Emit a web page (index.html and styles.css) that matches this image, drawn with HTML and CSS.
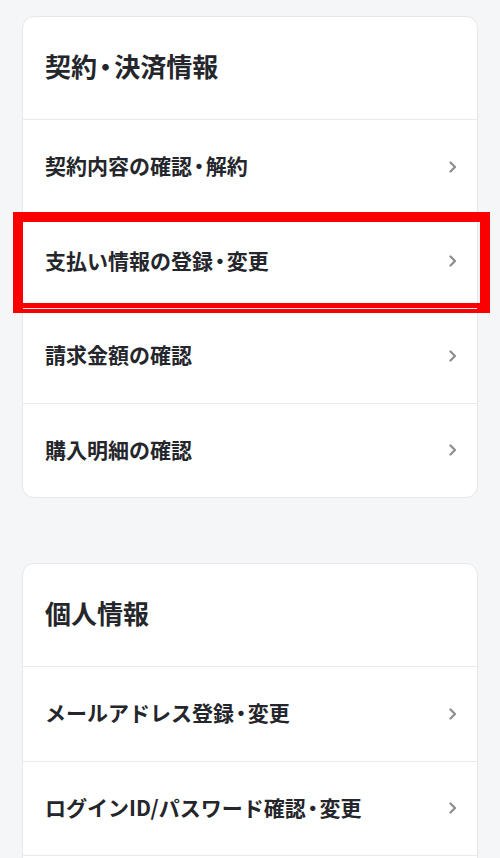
FILE: index.html
```html
<!DOCTYPE html>
<html lang="ja">
<head>
<meta charset="utf-8">
<link rel="stylesheet" href="styles.css">
</head>
<body>
<div class="page">
  <section class="card">
    <h2 class="card-title">契約<span class="sep">・</span>決済情報</h2>
    <a class="row"><span class="label">契約内容の確認<span class="sep">・</span>解約</span><svg class="chev" viewBox="0 0 8 12"><path d="M1.5 1.5 L6 6 L1.5 10.5"/></svg></a>
    <a class="row highlighted"><span class="label">支払い情報の登録<span class="sep">・</span>変更</span><svg class="chev" viewBox="0 0 8 12"><path d="M1.5 1.5 L6 6 L1.5 10.5"/></svg><span class="mark"></span></a>
    <a class="row"><span class="label">請求金額の確認</span><svg class="chev" viewBox="0 0 8 12"><path d="M1.5 1.5 L6 6 L1.5 10.5"/></svg></a>
    <a class="row"><span class="label">購入明細の確認</span><svg class="chev" viewBox="0 0 8 12"><path d="M1.5 1.5 L6 6 L1.5 10.5"/></svg></a>
  </section>
  <section class="card">
    <h2 class="card-title">個人情報</h2>
    <a class="row"><span class="label">メールアドレス登録<span class="sep">・</span>変更</span><svg class="chev" viewBox="0 0 8 12"><path d="M1.5 1.5 L6 6 L1.5 10.5"/></svg></a>
    <a class="row"><span class="label">ログインID/パスワード確認<span class="sep">・</span>変更</span><svg class="chev" viewBox="0 0 8 12"><path d="M1.5 1.5 L6 6 L1.5 10.5"/></svg></a>
    <a class="row"><span class="label">&nbsp;</span></a>
  </section>
</div>
</body>
</html>
```

FILE: styles.css
```css
html, body {
  margin: 0;
  padding: 0;
  background: #f5f6f8;
}
body {
  font-family: "Noto Sans CJK JP", "Noto Sans", sans-serif;
  color: #24262b;
  overflow: hidden;
}
.page {
  padding: 16px 22px 0 22px;
  display: flex;
  flex-direction: column;
  gap: 65px;
}
.card {
  background: #ffffff;
  border: 1px solid #e5e7ea;
  border-radius: 12px;
  display: flex;
  flex-direction: column;
}
.card-title {
  margin: 0;
  height: 102px;
  display: flex;
  align-items: center;
  padding: 0 22px 5px 22px;
  box-sizing: border-box;
  font-size: 26px;
  font-weight: 700;
  white-space: nowrap;
}
.row {
  position: relative;
  height: 93.5px;
  box-sizing: content-box;
  border-top: 1px solid #e8eaed;
  display: flex;
  align-items: center;
  justify-content: space-between;
  padding: 0 20px 0 22px;
  font-size: 21px;
  font-weight: 700;
  color: #24262b;
}
.label {
  white-space: nowrap;
  padding-bottom: 3px;
}
.sep {
  font-feature-settings: "palt";
  padding: 0 0.08em;
}
.chev {
  width: 8px;
  height: 12px;
  flex: none;
  fill: none;
  stroke: #8a8c8f;
  stroke-width: 2.2;
  stroke-linecap: round;
  stroke-linejoin: round;
}
.mark {
  position: absolute;
  top: -3px;
  bottom: -5px;
  left: -10px;
  right: -13px;
  border: 10px solid #fb0000;
  pointer-events: none;
}
```
